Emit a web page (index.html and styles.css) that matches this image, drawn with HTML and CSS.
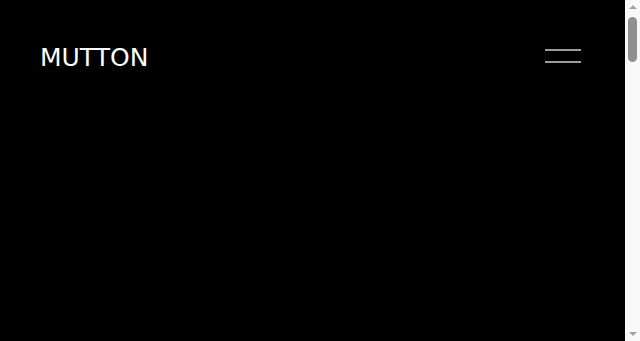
FILE: index.html
```html
<!DOCTYPE html>
<html lang="en">
<head>
  <meta charset="UTF-8">
  <meta name="viewport" content="width=device-width, initial-scale=1.0">
  <title>Mutton</title>
  <link rel="stylesheet" href="styles.css">
</head>
<body>
  <div class="page">
    <header class="site-header">
      <a class="logo" href="#">MUTTON</a>
      <button class="menu-toggle" aria-label="Menu">
        <span class="bar"></span>
        <span class="bar"></span>
      </button>
    </header>
    <main class="page-content"></main>
  </div>

  <!-- window scrollbar -->
  <div class="scrollbar">
    <div class="scroll-btn"><span class="arrow up"></span></div>
    <div class="scroll-track"><div class="scroll-thumb"></div></div>
    <div class="scroll-btn"><span class="arrow down"></span></div>
  </div>
</body>
</html>
```

FILE: styles.css
```css
html, body {
  margin: 0;
  padding: 0;
  height: 100%;
  overflow: hidden;
}

body {
  display: flex;
  background: #000;
  color: #fff;
  font-family: 'DejaVu Sans', sans-serif;
}

.page {
  flex: 1;
  min-width: 0;
}

.site-header {
  display: flex;
  justify-content: space-between;
  align-items: flex-start;
  padding: 40px 44px 0 40px;
  height: 36px;
}

.logo {
  color: #fff;
  text-decoration: none;
  font-size: 25px;
  line-height: 36px;
}

.menu-toggle {
  display: flex;
  flex-direction: column;
  gap: 10px;
  width: 36px;
  margin-top: 9px;
  padding: 0;
  background: none;
  border: none;
  cursor: pointer;
}

.menu-toggle .bar {
  display: block;
  height: 2px;
  width: 100%;
  background: #9c9c9c;
}

.scrollbar {
  width: 15px;
  display: flex;
  flex-direction: column;
  background: #f8f8f8;
}

.scroll-btn {
  height: 15px;
  display: flex;
  justify-content: center;
}

.arrow {
  width: 0;
  height: 0;
  border-left: 4px solid transparent;
  border-right: 4px solid transparent;
}

.arrow.up {
  margin-top: 5px;
  border-bottom: 4px solid #a3a3a3;
}

.arrow.down {
  margin-top: 6px;
  border-top: 4px solid #a3a3a3;
}

.scroll-track {
  flex: 1;
  padding: 2px 3px;
}

.scroll-thumb {
  height: 45px;
  border-radius: 5px;
  background: #8f8f8f;
}
```
